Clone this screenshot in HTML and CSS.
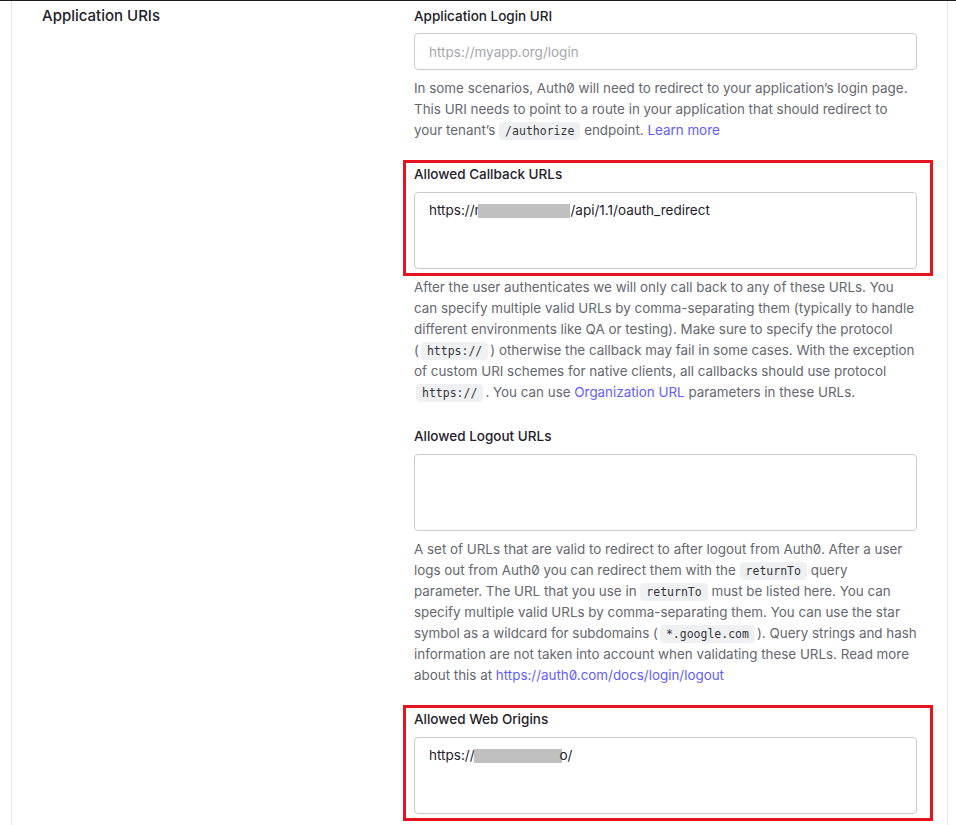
FILE: index.html
```html
<!DOCTYPE html>
<html lang="en">
<head>
    <meta charset="UTF-8">
    <title>Application URIs</title>
    <link rel="stylesheet" href="styles.css">
</head>
<body>

<div class="frame">
    <section class="card">
        <h2 class="row-title">Application URIs</h2>

        <div class="fields">
            <div class="field">
                <label for="loginUri">Application Login URI</label>
                <input type="text" id="loginUri" placeholder="https://myapp.org/login">
                <p class="help">In some scenarios, Auth0 will need to redirect to your application’s login page. This URI needs to point to a route in your application that should redirect to your tenant’s <code>/authorize</code> endpoint. <a href="#">Learn more</a></p>
            </div>

            <div class="field">
                <div class="marked">
                    <label>Allowed Callback URLs</label>
                    <div class="textarea">https://n<span class="redact"></span>/api/1.1/oauth_redirect</div>
                </div>
                <p class="help">After the user authenticates we will only call back to any of these URLs. You can specify multiple valid URLs by comma-separating them (typically to handle different environments like QA or testing). Make sure to specify the protocol (<code class="tight">https://</code>) otherwise the callback may fail in some cases. With the exception of custom URI schemes for native clients, all callbacks should use protocol <code class="tight">https://</code>. You can use <a href="#">Organization URL</a> parameters in these URLs.</p>
            </div>

            <div class="field">
                <label>Allowed Logout URLs</label>
                <div class="textarea"></div>
                <p class="help">A set of URLs that are valid to redirect to after logout from Auth0. After a user logs out from Auth0 you can redirect them with the <code>returnTo</code> query parameter. The URL that you use in <code>returnTo</code> must be listed here. You can specify multiple valid URLs by comma-separating them. You can use the star symbol as a wildcard for subdomains (<code class="tight">*.google.com</code>). Query strings and hash information are not taken into account when validating these URLs. Read more about this at <a href="#">https://auth0.com/docs/login/logout</a></p>
            </div>

            <div class="field">
                <div class="marked">
                    <label>Allowed Web Origins</label>
                    <div class="textarea">https://<span class="redact redact-web"></span>o/</div>
                </div>
            </div>
        </div>
    </section>
</div>

</body>
</html>
```

FILE: styles.css
```css
body {
    margin: 0;
    background: #fff;
    font-family: Inter, "Noto Sans", sans-serif;
    font-feature-settings: "zero";
    color: #1e212a;
}
.frame {
    border-top: 1px solid #1d1d1f;
    height: 824px;
    overflow: hidden;
}
.card {
    margin: 0 8px 0 11px;
    border-left: 1px solid #e3e3e5;
    border-right: 1px solid #e3e3e5;
    padding: 5px 30px 0 30px;
    display: grid;
    grid-template-columns: 372px 1fr;
    min-height: 900px;
}
.row-title {
    margin: 0;
    font-size: 15px;
    line-height: 20px;
    font-weight: 500;
}
.fields {
    display: flex;
    flex-direction: column;
    gap: 23px;
}
.field label {
    display: block;
    font-size: 13.5px;
    line-height: 20px;
    font-weight: 500;
    margin-bottom: 8px;
}
.field input {
    display: block;
    box-sizing: border-box;
    width: 100%;
    height: 37px;
    margin: -1px 0 0;
    padding: 0 14px;
    border: 1px solid #cbccd0;
    border-radius: 4px;
    font-family: inherit;
    font-size: 13.5px;
    color: #1e212a;
}
.field input::placeholder { color: #a6a7ab; }
.textarea {
    box-sizing: border-box;
    height: 77px;
    padding: 7px 14px;
    border: 1px solid #cbccd0;
    border-radius: 4px;
    font-size: 13.5px;
    line-height: 20px;
}
.redact {
    display: inline-block;
    width: 92px;
    height: 14px;
    margin-left: -4px;
    background: #c0c0c0;
    vertical-align: -3px;
}
.redact-web { width: 88px; margin-left: -1px; margin-right: -2px; }
.marked { position: relative; }
.marked::after {
    content: "";
    position: absolute;
    top: -4px;
    bottom: -7px;
    left: -11px;
    right: -16px;
    border: 3px solid #e5141e;
    pointer-events: none;
}
.help {
    margin: 8px 0 0;
    font-size: 13.4px;
    line-height: 21px;
    color: #65676e;
}
.help a {
    color: #635dff;
    text-decoration: none;
}
.help code {
    font-family: "DejaVu Sans Mono", monospace;
    font-size: 11.5px;
    line-height: 1;
    color: #33353c;
    background: #eff0f2;
    border-radius: 4px;
    padding: 2px 6px;
}
.help code.tight { margin: 0 2px; }
```
